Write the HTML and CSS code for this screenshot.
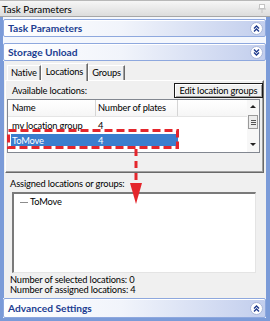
FILE: index.html
```html
<!DOCTYPE html>
<html lang="en">
  <head>
    <meta charset="UTF-8" />
    <title>Task Parameters</title>
    <link rel="stylesheet" href="styles.css">
  </head>
  <body>
    <div class="title-bar">
      <span>Task Parameters</span>
      <svg class="pin" width="8" height="9" viewBox="0 0 8 9">
        <rect x="1.5" y="0.5" width="5" height="4" fill="#fff" stroke="#c4c4c4" />
        <line x1="0" y1="5" x2="8" y2="5" stroke="#c4c4c4" />
        <line x1="4" y1="5" x2="4" y2="9" stroke="#c4c4c4" />
      </svg>
    </div>

    <div class="pane">
      <div class="group-head">
        <span>Task Parameters</span>
        <svg class="chev" width="13" height="13" viewBox="0 0 13 13">
          <circle cx="6.5" cy="6.5" r="6" fill="#fff" stroke="#a9b6d8" />
          <polyline points="4,6.5 6.5,4 9,6.5" fill="none" stroke="#1e3a8c" stroke-width="1.4" />
          <polyline points="4,9.5 6.5,7 9,9.5" fill="none" stroke="#1e3a8c" stroke-width="1.4" />
        </svg>
      </div>
      <div class="group-head">
        <span>Storage Unload</span>
        <svg class="chev" width="13" height="13" viewBox="0 0 13 13">
          <circle cx="6.5" cy="6.5" r="6" fill="#fff" stroke="#a9b6d8" />
          <polyline points="4,3.5 6.5,6 9,3.5" fill="none" stroke="#1e3a8c" stroke-width="1.4" />
          <polyline points="4,6.5 6.5,9 9,6.5" fill="none" stroke="#1e3a8c" stroke-width="1.4" />
        </svg>
      </div>

      <div class="group-body">
        <div class="tabs">
          <div class="tab">Native</div>
          <div class="tab active">Locations</div>
          <div class="tab">Groups</div>
        </div>
        <div class="tab-panel">
          <div class="panel-top">
            <span class="label">Available locations:</span>
            <button class="btn">Edit location groups</button>
          </div>
          <div class="list">
            <div class="list-main">
              <div class="list-head">
                <div class="col name">Name</div>
                <div class="col num">Number of plates</div>
              </div>
              <div class="row">
                <div class="col name">my location group</div>
                <div class="col num">4</div>
              </div>
              <div class="row selected">
                <div class="col name">ToMove</div>
                <div class="col num">4</div>
              </div>
            </div>
            <div class="scrollbar">
              <span class="arrow up"></span>
              <span class="thumb"><i></i><i></i><i></i></span>
              <span class="arrow down"></span>
            </div>
          </div>
        </div>

        <div class="assigned-label">Assigned locations or groups:</div>
        <div class="tree">
          <div class="tree-item"><span class="dash"></span>ToMove</div>
        </div>
        <div class="counts">
          <div>Number of selected locations: 0</div>
          <div>Number of assigned locations: 4</div>
        </div>
      </div>

      <div class="group-head tall">
        <span>Advanced Settings</span>
        <svg class="chev" width="13" height="13" viewBox="0 0 13 13">
          <circle cx="6.5" cy="6.5" r="6" fill="#fff" stroke="#a9b6d8" />
          <polyline points="4,6.5 6.5,4 9,6.5" fill="none" stroke="#1e3a8c" stroke-width="1.4" />
          <polyline points="4,9.5 6.5,7 9,9.5" fill="none" stroke="#1e3a8c" stroke-width="1.4" />
        </svg>
      </div>
    </div>

    <!-- annotation drawn over the dialog -->
    <svg class="overlay" width="270" height="321" viewBox="0 0 270 321">
      <rect x="8.5" y="130.5" width="169" height="17" fill="none" stroke="#e4262c" stroke-width="3" stroke-dasharray="8 4" />
      <line x1="136" y1="149" x2="136" y2="184" stroke="#e4262c" stroke-width="3" stroke-dasharray="7 5" />
      <polygon points="130,183 142,183 136,204" fill="#e4262c" />
    </svg>
  </body>
</html>
```

FILE: styles.css
```css
* {
  box-sizing: border-box;
}
body {
  margin: 0;
  width: 270px;
  height: 321px;
  overflow: hidden;
  position: relative;
  font-family: Lato, "Liberation Sans", sans-serif;
  font-size: 9.3px;
  letter-spacing: -0.15px;
  color: #000;
  background: #fff;
}
.title-bar {
  height: 17px;
  display: flex;
  align-items: center;
  justify-content: space-between;
  padding: 0 4px 0 2px;
  background: linear-gradient(#f6f6f6, #dcdcdc);
  border-top: 1px solid #b8b8b8;
  border-bottom: 1px solid #a6a6a6;
  font-size: 9.8px;
  letter-spacing: 0;
}
.pane {
  height: 304px;
  display: flex;
  flex-direction: column;
  padding-top: 2px;
  border-left: 3px solid #7b9bd8;
  border-right: 4px solid #7b9bd8;
  border-bottom: 3px solid #7b9bd8;
  background: #f4f7fd;
}
.group-head {
  flex: none;
  height: 18px;
  display: flex;
  align-items: center;
  justify-content: space-between;
  padding: 0 2px 0 4px;
  border: 1px solid #8ea8de;
  border-radius: 2px;
  background: linear-gradient(90deg, #fff 0%, #f1f4fb 45%, #c2ceed 100%);
  box-shadow: inset 0 1px #fff;
  color: #213d91;
  font-weight: 700;
  font-size: 10.2px;
  letter-spacing: 0;
}
.group-head + .group-head {
  margin-top: 6px;
}
.group-head.tall {
  height: 20px;
}
.group-body {
  flex: none;
  height: 237px;
  border-left: 1px solid #7b9bd8;
  background: #f0f0f0;
}
.tabs {
  display: flex;
  align-items: flex-end;
  height: 17px;
  margin-top: 2px;
  padding-left: 3px;
}
.tab {
  height: 15px;
  padding: 0 3px;
  line-height: 14px;
  border-top: 1px solid #fff;
  border-left: 1px solid #fff;
  border-right: 1px solid #696969;
  box-shadow: inset -1px 0 #a0a0a0;
}
.tab.active {
  height: 18px;
  margin-bottom: -1px;
  position: relative;
  z-index: 1;
  padding: 0 4px;
  line-height: 15px;
  background: #f0f0f0;
}
.tab-panel {
  height: 93px;
  margin: 0 2px 0 1px;
  padding: 1px 0 0 1px;
  border-top: 1px solid #fff;
  border-left: 1px solid #fff;
  border-right: 1px solid #696969;
  border-bottom: 1px solid #696969;
  box-shadow: inset -1px -1px #a0a0a0;
}
.panel-top {
  height: 15px;
  margin-top: 1px;
  display: flex;
  align-items: center;
  justify-content: space-between;
}
.label {
  padding-left: 5px;
}
.btn {
  width: 89px;
  height: 15px;
  padding: 0;
  font: inherit;
  letter-spacing: inherit;
  color: #000;
  border: 1px solid #1a1a1a;
  background: #f0f0f0;
  box-shadow: inset 1px 1px #fff, inset -1px -1px #a0a0a0;
}
.list {
  display: flex;
  width: 253px;
  height: 54px;
  margin-top: 1px;
  border: 1px solid #828790;
  background: #fff;
}
.list-main {
  width: 239px;
}
.list-head {
  display: flex;
  height: 17px;
  border-bottom: 1px solid #e5e5e5;
  background: linear-gradient(#fff, #f6f6f6);
}
.list-head .col {
  line-height: 15px;
  border-right: 1px solid #d5d5d5;
}
.col.name {
  width: 88px;
  padding-left: 4px;
  white-space: nowrap;
}
.col.num {
  width: 82px;
  padding-left: 2px;
  white-space: nowrap;
}
.row {
  display: flex;
  align-items: center;
  height: 16px;
}
.row.selected {
  width: 167px;
  height: 12px;
  margin: 1px 0 3px 3px;
  background: #3b7ece;
  color: #fff;
}
.row.selected .name {
  width: 85px;
  padding-left: 1px;
}
.scrollbar {
  position: relative;
  width: 12px;
  background: #f7f7f7;
}
.arrow {
  position: absolute;
  left: 3px;
  width: 0;
  height: 0;
  border-left: 3px solid transparent;
  border-right: 3px solid transparent;
}
.arrow.up {
  top: 5px;
  border-bottom: 3px solid #222;
}
.arrow.down {
  bottom: 6px;
  border-top: 3px solid #222;
}
.thumb {
  position: absolute;
  top: 15px;
  left: 1px;
  width: 10px;
  height: 14px;
  display: flex;
  flex-direction: column;
  align-items: center;
  justify-content: center;
  gap: 1px;
  border: 1px solid #9a9a9a;
  background: #ececec;
}
.thumb i {
  width: 5px;
  height: 1px;
  background: #555;
}
.assigned-label {
  height: 12px;
  margin-top: 5px;
  padding-left: 6px;
  line-height: 12px;
}
.tree {
  width: 244px;
  height: 81px;
  margin: 2px 0 0 8px;
  padding-top: 1px;
  border-style: solid;
  border-width: 2px 1px 1px 2px;
  border-color: #7a7a7a #e4e4e4 #e4e4e4 #7a7a7a;
  background: #fff;
}
.tree-item {
  height: 13px;
  line-height: 13px;
  padding-left: 6px;
}
.dash {
  display: inline-block;
  width: 8px;
  height: 1px;
  margin-right: 2px;
  vertical-align: middle;
  background: #8c8c8c;
}
.counts {
  margin-top: 2px;
  padding-left: 6px;
  line-height: 10px;
}
.overlay {
  position: absolute;
  top: 0;
  left: 0;
  pointer-events: none;
}
```
